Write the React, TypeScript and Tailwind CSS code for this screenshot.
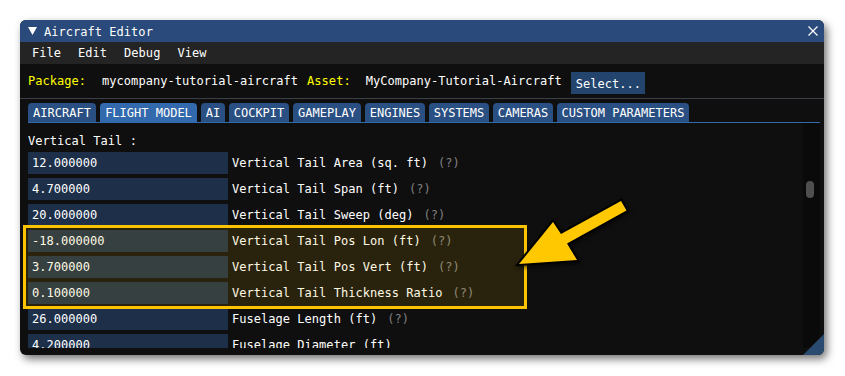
import React from "react";

const rows: { v: string; l: string }[] = [
  { v: "12.000000", l: "Vertical Tail Area (sq. ft)" },
  { v: "4.700000", l: "Vertical Tail Span (ft)" },
  { v: "20.000000", l: "Vertical Tail Sweep (deg)" },
  { v: "-18.000000", l: "Vertical Tail Pos Lon (ft)" },
  { v: "3.700000", l: "Vertical Tail Pos Vert (ft)" },
  { v: "0.100000", l: "Vertical Tail Thickness Ratio" },
  { v: "26.000000", l: "Fuselage Length (ft)" },
  { v: "4.200000", l: "Fuselage Diameter (ft)" },
];

const tabs: { t: string; w: string }[] = [
  { t: "AIRCRAFT", w: "w-[68px]" },
  { t: "FLIGHT MODEL", w: "w-[97px]" },
  { t: "AI", w: "w-[24px]" },
  { t: "COCKPIT", w: "w-[60px]" },
  { t: "GAMEPLAY", w: "w-[68px]" },
  { t: "ENGINES", w: "w-[60px]" },
  { t: "SYSTEMS", w: "w-[60px]" },
  { t: "CAMERAS", w: "w-[60px]" },
  { t: "CUSTOM PARAMETERS", w: "w-[132px]" },
];

export default function App() {
  return (
    <div
      className="relative w-[845px] h-[376px] bg-white overflow-hidden pt-[20px] pl-[20px] text-[12px] tracking-[0.035px] text-white"
      style={{ fontFamily: '"DejaVu Sans Mono", "Liberation Mono", monospace' }}
    >
      <div className="relative w-[804px] h-[335px] rounded-[6px] bg-[#0f0f0f] overflow-hidden shadow-[3px_4px_9px_rgba(0,0,0,0.55)] flex flex-col">
        {/* title bar */}
        <div className="h-[22px] shrink-0 bg-[#294a7a] flex items-center pl-[8px] pr-[6px]">
          <svg width="9" height="8" viewBox="0 0 9 8" className="shrink-0">
            <polygon points="0,0 9,0 4.5,8" fill="#ffffff" />
          </svg>
          <span className="ml-[7px] leading-[16px] mt-[1px]">Aircraft Editor</span>
          <svg width="10" height="10" viewBox="0 0 10 10" className="ml-auto shrink-0">
            <path d="M0.5 0.5 L9.5 9.5 M9.5 0.5 L0.5 9.5" stroke="#ffffff" strokeWidth="1.2" />
          </svg>
        </div>
        {/* menu bar */}
        <div className="h-[22px] shrink-0 bg-[#242424] flex items-center pl-[12px] gap-[17px] leading-[16px]">
          <span>File</span>
          <span>Edit</span>
          <span>Debug</span>
          <span>View</span>
        </div>
        {/* package row */}
        <div className="shrink-0 pt-[8px] pb-[4px] px-[8px] flex items-start h-[34px]">
          <span className="text-[#ffff00] leading-[16px] mt-[1px]">Package:</span>
          <span className="ml-[16px] leading-[16px] mt-[1px]">mycompany-tutorial-aircraft</span>
          <span className="ml-[9px] text-[#ffff00] leading-[16px] mt-[1px]">Asset:</span>
          <span className="ml-[15px] leading-[16px] mt-[1px]">MyCompany-Tutorial-Aircraft</span>
          <div className="ml-[9px] h-[22px] w-[74px] bg-[#23456d] pl-[5px] pt-[4px] leading-[16px]">Select...</div>
        </div>
        <div className="h-[1px] shrink-0 bg-[#3e3e47]" />
        {/* tabs */}
        <div className="shrink-0 mt-[4px] pl-[8px] pr-[4px]">
          <div className="flex gap-[4px] h-[19px]">
            {tabs.map((t) => (
              <div
                key={t.t}
                className={
                  t.w +
                  " shrink-0 text-center tracking-normal whitespace-nowrap rounded-t-[4px] leading-[20px] " +
                  (t.t === "FLIGHT MODEL" ? "bg-[#3369ad]" : "bg-[#2a4f82]")
                }
              >
                {t.t}
              </div>
            ))}
          </div>
          <div className="h-[1px] bg-[#3369ad]" />
        </div>
        {/* content */}
        <div className="flex h-[225px] shrink-0">
          <div className="flex-1 overflow-hidden pl-[8px] pt-[10px]">
            <div className="leading-[16px]">Vertical Tail :</div>
            <div className="mt-[3px] flex flex-col gap-[4px]">
              {rows.map((r) => (
                <div key={r.v} className="flex items-center h-[22px] shrink-0">
                  <div className="w-[200px] h-[22px] bg-[#1d2f49] pl-[4px] leading-[22px] shrink-0">{r.v}</div>
                  <span className="ml-[4px] whitespace-nowrap leading-[16px]">{r.l}</span>
                  {r.v !== "4.200000" && (
                    <span className="ml-[10px] text-[#808080] leading-[16px]">(?)</span>
                  )}
                </div>
              ))}
            </div>
          </div>
          <div className="w-[17px] bg-[#0a0a0a] mr-[4px] pt-[58px] pl-[3px] shrink-0">
            <div className="w-[8px] h-[17px] rounded-full bg-[#4f4f4f]" />
          </div>
        </div>
        {/* resize grip */}
        <svg width="21" height="21" viewBox="0 0 21 21" className="absolute right-0 bottom-0">
          <polygon points="21,0 21,21 0,21" fill="#2a4a70" />
        </svg>
      </div>

      {/* annotation overlay box */}
      <div className="absolute left-[23px] top-[225px] w-[504px] h-[84px] border-[3px] border-[#fcc400] bg-[#ffc800]/[0.11]" />

      {/* annotation arrow */}
      <svg
        className="absolute left-0 top-0 pointer-events-none"
        width="845"
        height="376"
        viewBox="0 0 845 376"
        style={{ filter: "drop-shadow(1px 2px 2px rgba(0,0,0,0.6))" }}
      >
        <polygon
          points="519,264 553,222 561,234 621,201 626.5,210.5 567,243.5 577,260"
          fill="#ffc800"
          stroke="#000000"
          strokeWidth="4"
          strokeLinejoin="miter"
          paintOrder="stroke"
        />
      </svg>
    </div>
  );
}
